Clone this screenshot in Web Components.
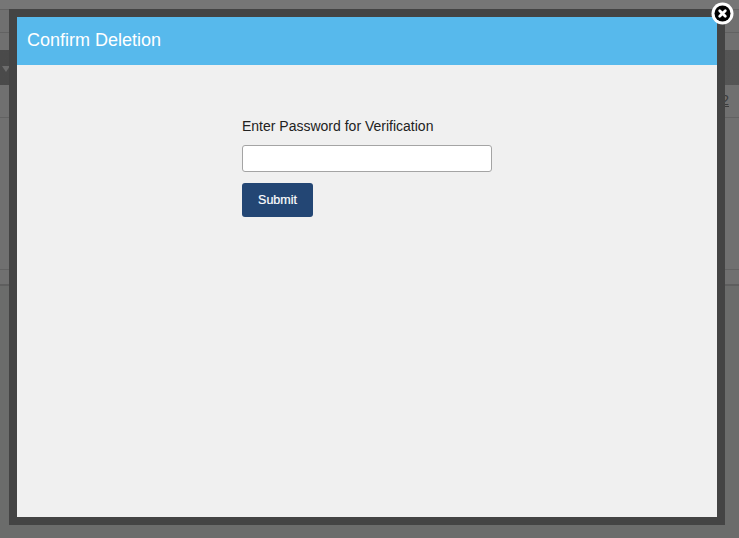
<!DOCTYPE html>
<html>
<head>
<meta charset="utf-8">
<title>Confirm Deletion</title>
<style>
  html, body { margin: 0; height: 100%; overflow: hidden; background: #6b6c6b; }
  body { font-family: "Liberation Sans", Arial, sans-serif; }
</style>
</head>
<body>
<page-behind></page-behind>
<modal-dialog heading="Confirm Deletion">
  <password-form label="Enter Password for Verification" action="Submit"></password-form>
</modal-dialog>

<script>
class PageBehind extends HTMLElement {
  constructor() {
    super();
    this.shadowDOM = this.attachShadow({ mode: "open" });
  }
  connectedCallback() {
    this.shadowDOM.innerHTML = `<style>
      :host { display: block; height: 538px; background: #6b6c6b; color: #3a3a3a; font-size: 14px; }
      .row { box-sizing: border-box; border-bottom: 1px solid #626262; background: #707070; }
      .top { height: 10px; background: #767676; }
      .nav { height: 23px; }
      .gap { height: 17px; border-bottom: 0; }
      .head { height: 35px; background: linear-gradient(90deg, #4a4a4a, #555); border-bottom: 0; padding: 16px 0 0 2px; }
      .arrow { width: 0; height: 0; border-left: 4px solid transparent; border-right: 4px solid transparent; border-top: 6px solid #6c6c6c; }
      .data { height: 33px; display: flex; justify-content: flex-end; align-items: center; padding: 0 10px 2px 0; }
      .data u { color: #3c3c3c; }
      .blank { height: 152px; }
      .foot { height: 16px; border-bottom: 2px solid #5e5e5e; }
    </style>
    <div class="row top"></div>
    <div class="row nav"></div>
    <div class="row gap"></div>
    <div class="row head"><div class="arrow"></div></div>
    <div class="row data"><u>2</u></div>
    <div class="row blank"></div>
    <div class="row foot"></div>`;
  }
}
customElements.define("page-behind", PageBehind);

class ModalDialog extends HTMLElement {
  constructor() {
    super();
    this.shadowDOM = this.attachShadow({ mode: "open" });
  }
  connectedCallback() {
    this.shadowDOM.innerHTML = `<style>
      :host { position: fixed; left: 9px; top: 9px; width: 700px; height: 500px; display: flex; flex-direction: column; border: 8px solid #444444; background: #f0f0f0; }
      header { box-sizing: border-box; height: 48px; flex: none; background: #57b9ec; color: #fff; font-size: 18px; line-height: 46px; padding-left: 10px; }
      .body { flex: 1; }
      button { position: absolute; right: -17px; top: -15px; width: 23px; height: 23px; padding: 0; border: 0; background: none; cursor: pointer; }
      svg { display: block; }
    </style>
    <header>${this.getAttribute("heading")}</header>
    <div class="body"><slot></slot></div>
    <button aria-label="Close">
      <svg width="23" height="23" viewBox="0 0 23 23">
        <circle cx="11.5" cy="11.5" r="11" fill="#fff"/>
        <circle cx="11.5" cy="11.5" r="8" fill="#000"/>
        <path d="M8.7 8.7l5.6 5.6M14.3 8.7l-5.6 5.6" stroke="#fff" stroke-width="2.8" stroke-linecap="round"/>
      </svg>
    </button>`;
  }
}
customElements.define("modal-dialog", ModalDialog);

class PasswordForm extends HTMLElement {
  constructor() {
    super();
    this.shadowDOM = this.attachShadow({ mode: "open" });
  }
  connectedCallback() {
    this.shadowDOM.innerHTML = `<style>
      :host { display: flex; flex-direction: column; align-items: flex-start; width: 250px; margin: 53px 0 0 225px; color: #222; font-size: 14px; }
      label { line-height: 16px; margin-bottom: 11px; }
      input { box-sizing: border-box; width: 250px; height: 27px; margin: 0 0 11px; border: 1px solid #a4a4a4; border-radius: 3px; background: #fff; outline: 0; }
      button { box-sizing: border-box; width: 71px; height: 34px; padding: 0; border: 0; border-radius: 3px; background: #234674; color: #fff; font: 12.5px "Liberation Sans", Arial, sans-serif; -webkit-text-stroke: 0.2px #fff; cursor: pointer; }
    </style>
    <label for="pw">${this.getAttribute("label")}</label>
    <input id="pw" type="password">
    <button type="submit">${this.getAttribute("action")}</button>`;
  }
}
customElements.define("password-form", PasswordForm);
</script>
</body>
</html>
